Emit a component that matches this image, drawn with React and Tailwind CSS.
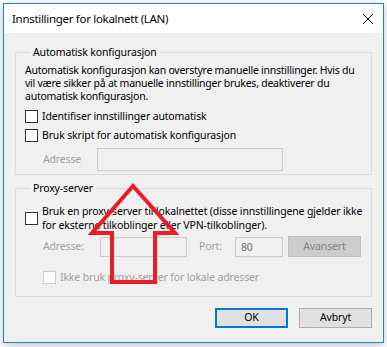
const Check = ({ disabled }) => (
  <span
    className={`inline-block w-[13px] h-[13px] shrink-0 bg-white border ${
      disabled ? 'border-[#cccccc]' : 'border-[#333333]'
    }`}
  />
)

const Group = ({ title, className, children }) => (
  <fieldset className={`mx-[11px] border border-[#dcdcdc] px-[9px] ${className}`}>
    <legend className="ml-[5px] px-[3px] h-[16px] leading-[16px]">{title}</legend>
    {children}
  </fieldset>
)

export default function App() {
  return (
    <div
      className="relative w-[387px] h-[347px] bg-white text-[10.5px] tracking-[-0.15px] text-black"
      style={{ fontFamily: '"Segoe UI", "Noto Sans", sans-serif' }}
    >
      <div className="ml-[3px] pt-[3px]">
        <div className="w-[381px] h-[340px] border border-[#1883d7] bg-[#f0f0f0] shadow-[0_2px_8px_rgba(0,0,0,0.25)] flex flex-col">
          <div className="h-[29px] shrink-0 bg-white flex items-center justify-between pl-[8px] pr-[8px]">
            <span className="text-[11.5px] tracking-[-0.3px]">Innstillinger for lokalnett (LAN)</span>
            <svg width="12" height="12" viewBox="0 0 12 12" className="mr-[1px]">
              <path d="M1 1L11 11M11 1L1 11" stroke="#000" strokeWidth="1" />
            </svg>
          </div>

          <Group title="Automatisk konfigurasjon" className="mt-[11px] pb-[3px]">
            <p className="pt-[4px] leading-[13px] whitespace-nowrap tracking-[-0.25px]">
              Automatisk konfigurasjon kan overstyre manuelle innstillinger. Hvis du
              <br />
              vil være sikker på at manuelle innstillinger brukes, deaktiverer du
              <br />
              automatisk konfigurasjon.
            </p>
            <div className="mt-[4px] h-[19px] flex items-center gap-[4px]">
              <Check />
              <span>Identifiser innstillinger automatisk</span>
            </div>
            <div className="h-[19px] flex items-center gap-[4px]">
              <Check />
              <span>Bruk skript for automatisk konfigurasjon</span>
            </div>
            <div className="mt-[3px] flex items-center">
              <span className="w-[72px] pl-[18px] text-[#a0a0a0]">Adresse</span>
              <span className="w-[186px] h-[23px] border border-[#cccccc] bg-[#f0f0f0]" />
            </div>
          </Group>

          <Group title="Proxy-server" className="mt-[5px] pb-[12px]">
            <div className="mt-[8px] flex items-center gap-[4px]">
              <Check />
              <span className="leading-[14px] whitespace-nowrap">
                Bruk en proxy-server til lokalnettet (disse innstillingene gjelder ikke
                <br />
                for eksterne tilkoblinger eller VPN-tilkoblinger).
              </span>
            </div>
            <div className="mt-[4px] flex items-center text-[#a0a0a0]">
              <span className="w-[75px] pl-[18px]">Adresse:</span>
              <span className="w-[87px] h-[20px] border border-[#cccccc] bg-[#f0f0f0]" />
              <span className="ml-[12px] w-[36px]">Port:</span>
              <span className="w-[48px] h-[20px] border border-[#cccccc] bg-[#f0f0f0] pl-[5px] leading-[18px] text-[#6d6d6d]">
                80
              </span>
              <span className="ml-[5px] w-[73px] h-[21px] border border-[#bfbfbf] bg-[#cccccc] flex items-center justify-center text-[#838383]">
                Avansert
              </span>
            </div>
            <div className="mt-[13px] pl-[18px] flex items-center gap-[4px] text-[#a0a0a0]">
              <Check disabled />
              <span className="leading-[14px]">Ikke bruk proxy-server for lokale adresser</span>
            </div>
          </Group>

          <div className="mt-[11px] mr-[11px] flex justify-end gap-[11px]">
            <span className="w-[73px] h-[20px] border-2 border-[#0078d7] bg-[#e1e1e1] flex items-center justify-center">
              OK
            </span>
            <span className="w-[73px] h-[20px] border border-[#adadad] bg-[#e1e1e1] flex items-center justify-center">
              Avbryt
            </span>
          </div>
        </div>
      </div>

      <svg className="absolute left-0 top-0 pointer-events-none" width="387" height="347">
        <polygon
          points="133,186 175,233 155,233 155,282 112,282 112,233 92,233"
          fill="none"
          stroke="#ed1c24"
          strokeWidth="4"
          strokeLinejoin="miter"
        />
      </svg>
    </div>
  )
}
